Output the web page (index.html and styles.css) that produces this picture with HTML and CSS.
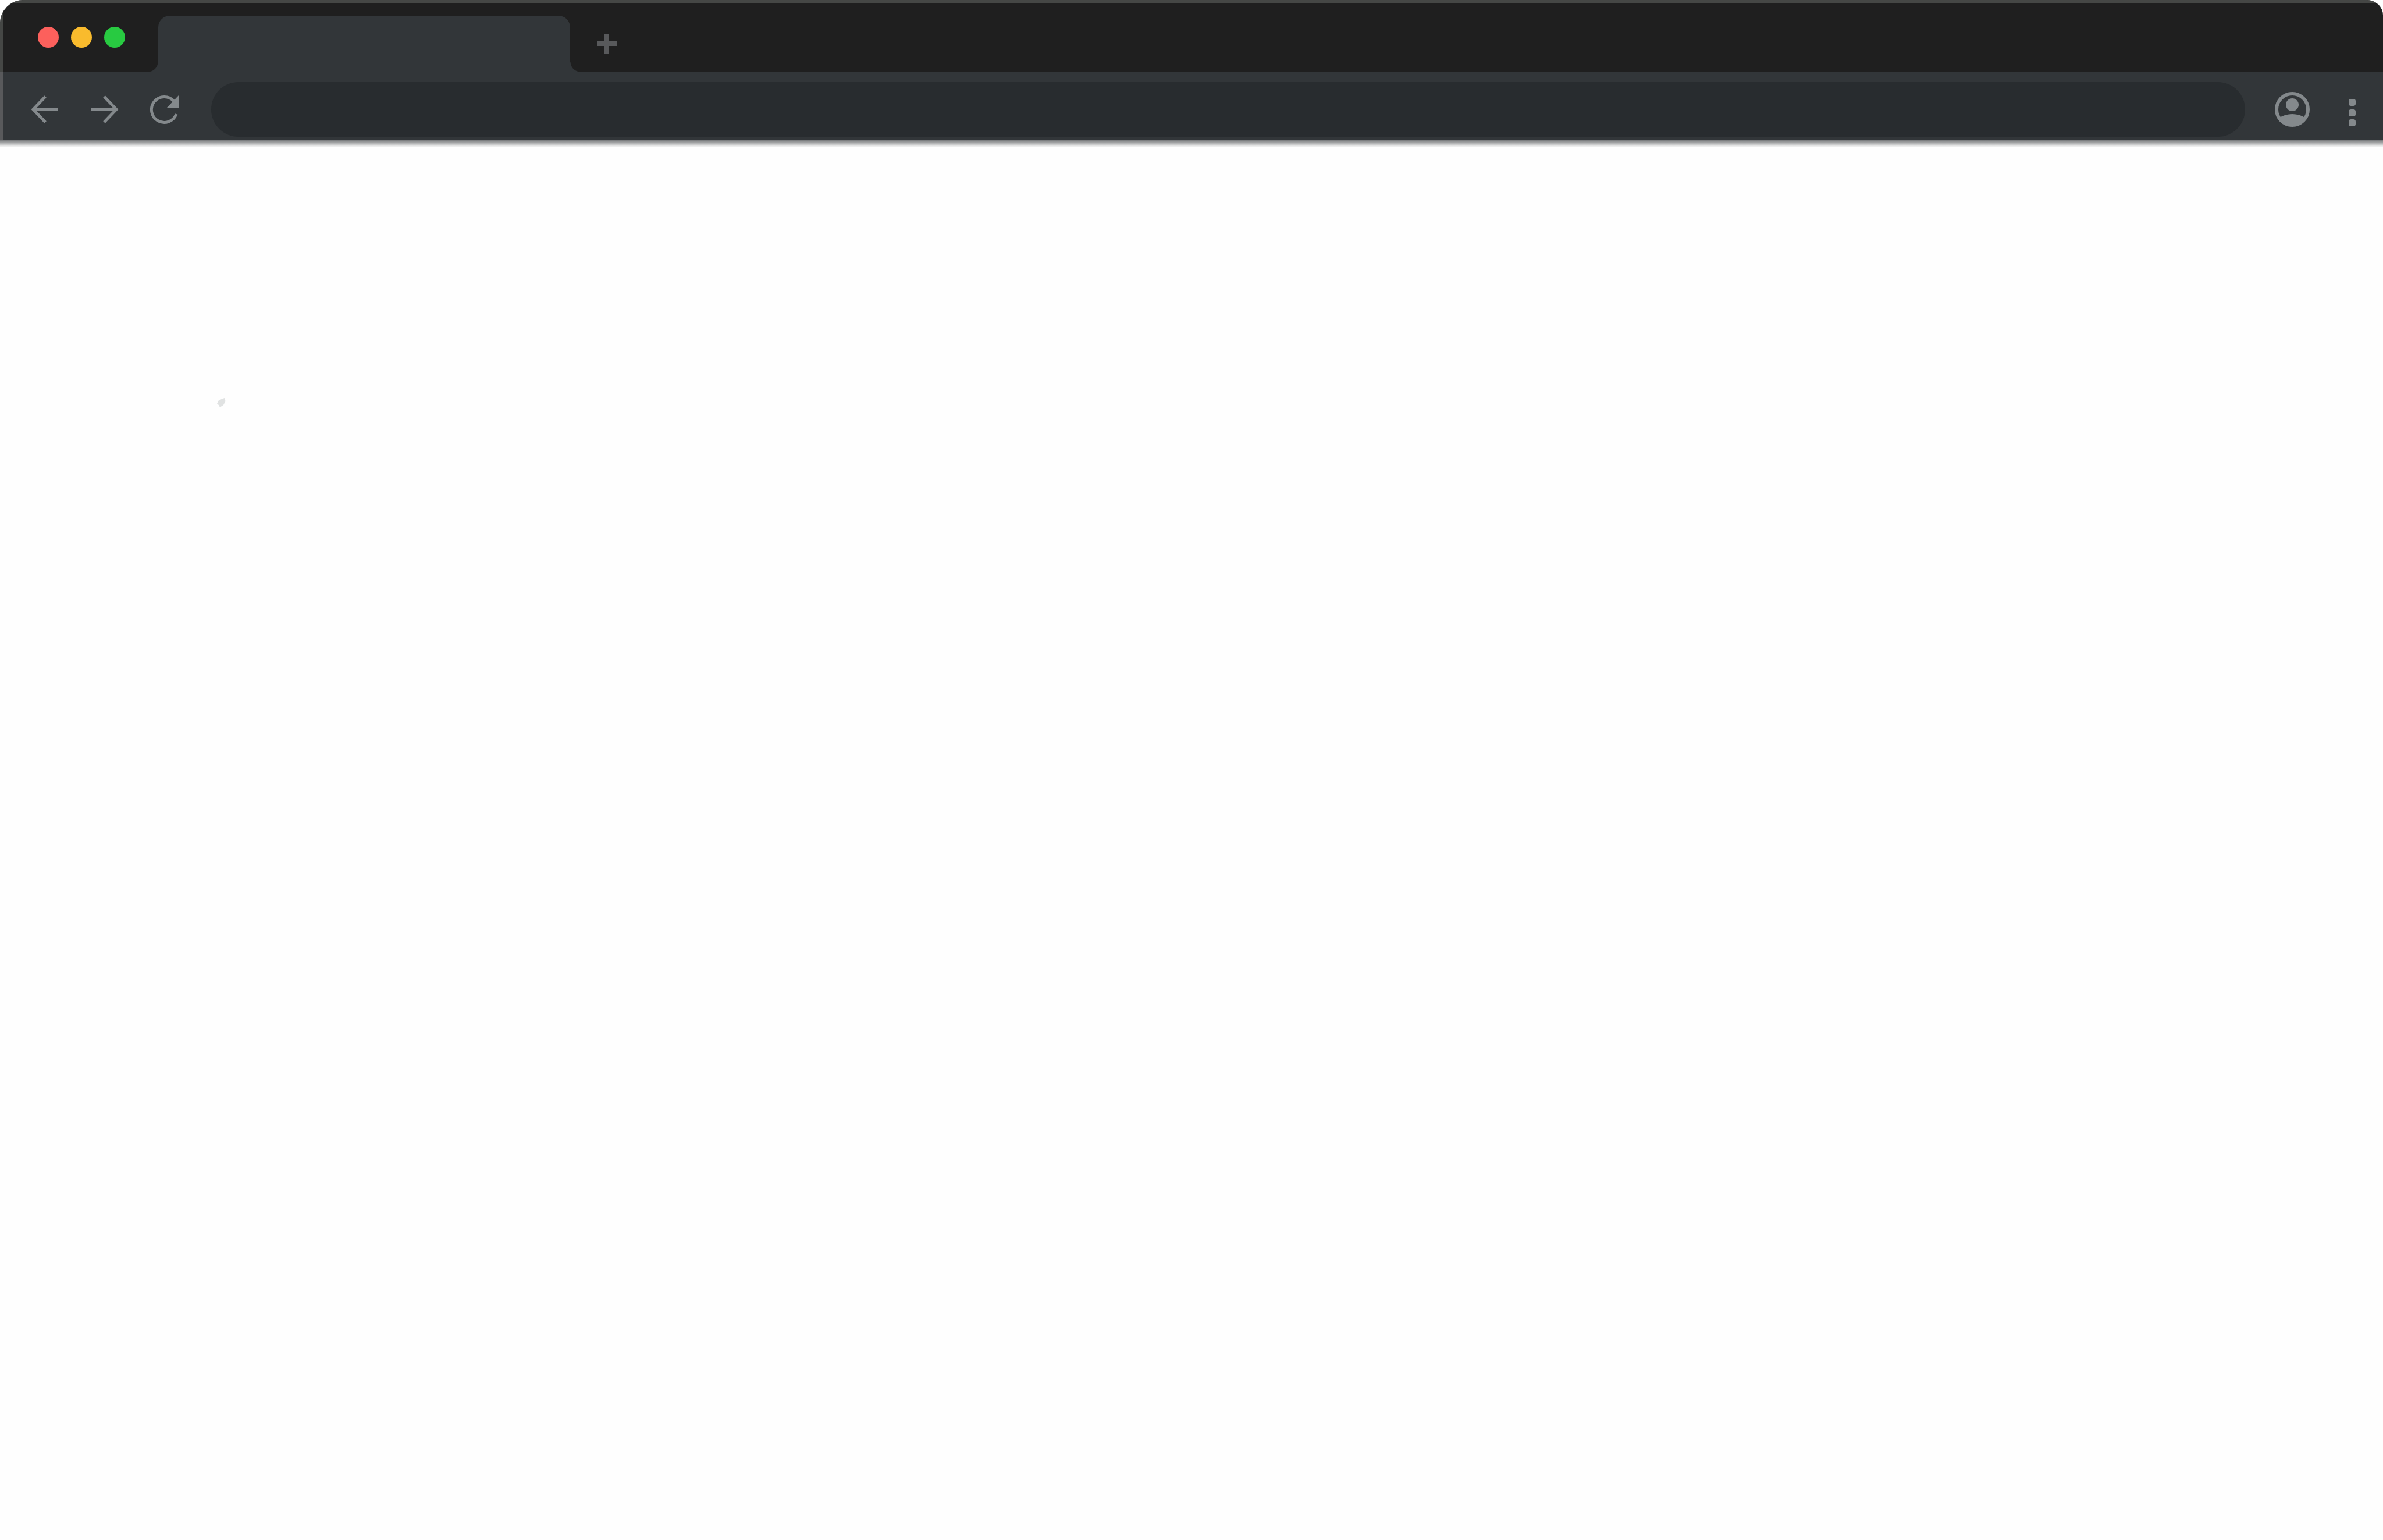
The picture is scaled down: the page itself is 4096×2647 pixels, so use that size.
FILE: index.html
```html
<!DOCTYPE html>
<html lang="en">
<head>
<meta charset="utf-8">
<title>New tab</title>
<link rel="stylesheet" href="styles.css">
</head>
<body>
<div class="browser">
  <header class="chrome">
    <div class="titlebar">
      <div class="lights">
        <button class="light light-close" type="button" aria-label="Close"></button>
        <button class="light light-minimize" type="button" aria-label="Minimize"></button>
        <button class="light light-expand" type="button" aria-label="Expand"></button>
      </div>
      <div class="tab"></div>
      <button class="icon-button new-tab" type="button" aria-label="Open a tab">
        <svg viewBox="0 0 36 36" width="36" height="36"><path d="M18 1v34M1 18h34"/></svg>
      </button>
    </div>
    <div class="toolbar">
      <nav class="navigation">
        <button class="icon-button" type="button" aria-label="Back">
          <svg viewBox="0 0 64 64" width="64" height="64"><path d="M53 32H12M32 10L11 32l21 22"/></svg>
        </button>
        <button class="icon-button" type="button" aria-label="Forward">
          <svg viewBox="0 0 64 64" width="64" height="64"><path d="M9 32h42M31 10l21 22-21 22"/></svg>
        </button>
        <button class="icon-button" type="button" aria-label="Reload">
          <svg viewBox="0 0 64 64" width="64" height="64"><path d="M53 40A22 22 0 1 1 49 18"/><path class="solid" d="M57 8v21H37z"/></svg>
        </button>
      </nav>
      <input class="address" type="text" aria-label="Address">
      <button class="icon-button" type="button" aria-label="Profile">
        <svg viewBox="0 0 72 72" width="72" height="72"><circle class="ring" cx="36" cy="36" r="27"/><circle class="solid" cx="36" cy="28" r="11"/><path class="solid" d="M14 50Q24 44 36 44t22 6Q50 65 36 65T14 50z"/></svg>
      </button>
      <button class="icon-button menu" type="button" aria-label="Menu">
        <svg viewBox="0 0 64 64" width="64" height="64"><rect class="solid" x="26" y="14" width="12" height="12" rx="4"/><rect class="solid" x="26" y="32" width="12" height="12" rx="4"/><rect class="solid" x="26" y="49" width="12" height="12" rx="4"/></svg>
      </button>
    </div>
  </header>
  <main class="page">
    <svg class="speck" viewBox="0 0 24 24" width="24" height="24" aria-hidden="true"><path d="M5 14l3-6 7-3 3-1v4l2 1-4 7-6 4-2-4z"/></svg>
  </main>
</div>
</body>
</html>
```
FILE: styles.css
```css
* {
  box-sizing: border-box;
}

body {
  margin: 0;
  background: #fefefe;
  font-family: "Liberation Sans", sans-serif;
}

.browser {
  display: flex;
  flex-direction: column;
  min-height: 100vh;
}

.chrome {
  overflow: hidden;
  border-radius: 40px 28px 0 0 / 40px 26px 0 0;
}

.titlebar {
  display: flex;
  height: 124px;
  padding-left: 60px;
  background: #1f1f1f;
  border-top: 5px solid #454745;
  box-shadow: inset 5px 0 #454745;
}

.lights {
  display: flex;
  gap: 21px;
  width: 212px;
  padding-top: 41px;
  padding-left: 5px;
}

.light {
  width: 36px;
  height: 36px;
  padding: 0;
  border: 0;
  border-radius: 50%;
}

.light-close {
  background: #fc605c;
}

.light-minimize {
  background: #f9bb2d;
}

.light-expand {
  background: #28ca41;
}

.tab {
  position: relative;
  width: 708px;
  margin-top: 22px;
  background: #323639;
  border-radius: 20px 20px 0 0;
}

/* Flared feet that join the tab to the toolbar */
.tab::before,
.tab::after {
  content: "";
  position: absolute;
  bottom: 0;
  width: 18px;
  height: 18px;
}

.tab::before {
  right: 100%;
  background: radial-gradient(circle at 0 0, transparent 17px, #323639 18px);
}

.tab::after {
  left: 100%;
  background: radial-gradient(circle at 100% 0, transparent 17px, #323639 18px);
}

.icon-button {
  display: flex;
  align-items: center;
  justify-content: center;
  padding: 0;
  border: 0;
  background: none;
  color: #84898c;
}

.icon-button svg {
  fill: none;
  stroke: currentColor;
  stroke-width: 5px;
}

.icon-button .solid {
  fill: currentColor;
  stroke: none;
}

.icon-button .ring {
  stroke-width: 6px;
}

.new-tab {
  margin-top: 20px;
  margin-left: 45px;
  height: 100px;
  color: #58595b;
}

.new-tab svg {
  stroke-width: 8px;
}

.toolbar {
  display: flex;
  align-items: center;
  height: 129px;
  padding: 10px 21px 12px 46px;
  background:
    linear-gradient(#77797b, #fefefe) bottom / 100% 12px no-repeat,
    linear-gradient(#58595b, #58595b) left / 5px 100% no-repeat,
    #323639;
}

.navigation {
  display: flex;
  gap: 38px;
  margin-right: 49px;
}

.address {
  flex: 1;
  min-width: 0;
  height: 94px;
  margin-right: 45px;
  padding: 0 48px;
  border: 0;
  border-radius: 47px;
  background: #282c2f;
  color: #e8eaed;
  font: inherit;
  font-size: 40px;
}

.menu {
  margin-left: 35px;
}

.page {
  flex: 1;
  padding: 427px 368px;
}

.speck {
  display: block;
  fill: #e0e2e2;
}
```
